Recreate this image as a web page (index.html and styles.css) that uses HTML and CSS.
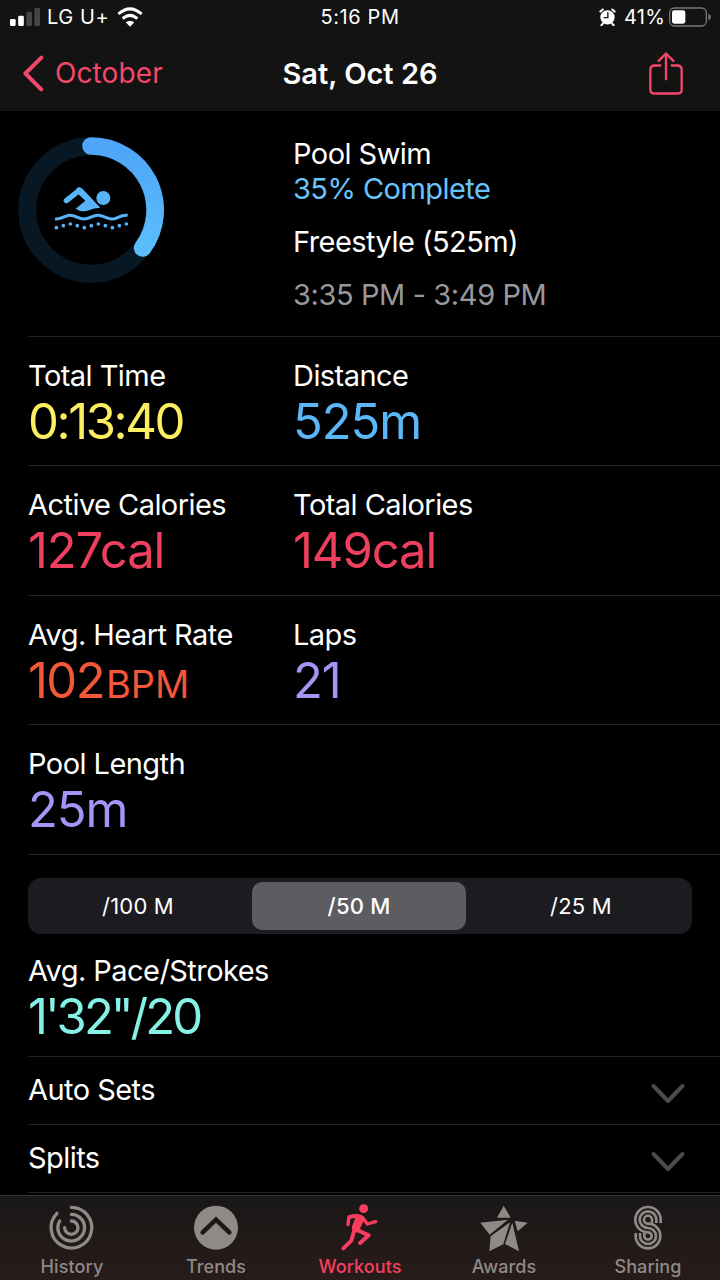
FILE: index.html
```html
<!DOCTYPE html>
<html lang="en">
<head>
    <meta charset="UTF-8">
    <meta name="viewport" content="width=device-width, initial-scale=1.0">
    <title>Workout</title>
    <link rel="stylesheet" href="styles.css">
</head>
<body>
    <header class="top">
        <div class="status">
            <div class="status-left">
                <svg class="signal" viewBox="0 0 90 54">
                    <rect x="0" y="33" width="17" height="21" rx="4"/>
                    <rect x="24.500" y="23" width="17" height="31" rx="4"/>
                    <rect class="off" x="49" y="11" width="17" height="43" rx="4"/>
                    <rect class="off" x="73" y="0" width="17" height="54" rx="4"/>
                </svg>
                <span class="carrier">LG U+</span>
                <svg class="wifi" viewBox="0 0 78 58">
                    <path d="M4 20Q39 -11 74 20"/>
                    <path d="M17 34Q39 14 61 34"/>
                    <path class="dot" d="M39 58L26 45Q39 35 52 45Z"/>
                </svg>
            </div>
            <span class="clock">5:16 PM</span>
            <div class="status-right">
                <svg class="alarm" viewBox="0 0 50 52">
                    <circle cx="25" cy="27" r="21"/>
                    <path class="ears" d="M4 10L11 4M46 10L39 4M11 46L7 50M39 46L43 50"/>
                    <path class="hands" d="M26 13V28H15"/>
                </svg>
                <span class="percent">41%</span>
                <svg class="battery" viewBox="0 0 126 58">
                    <rect class="shell" x="2" y="2" width="110" height="54" rx="14"/>
                    <rect class="charge" x="9" y="9" width="40" height="40" rx="7"/>
                    <path class="tip" d="M118 19Q126 22 126 29Q126 36 118 39Z"/>
                </svg>
            </div>
        </div>
        <nav class="nav">
            <a class="back">
                <svg class="back-icon" viewBox="0 0 66 112"><path d="M58 8L10 56L58 104"/></svg>
                <span>October</span>
            </a>
            <h1 class="title">Sat, Oct 26</h1>
            <svg class="share" viewBox="0 0 102 128">
                <path d="M34 40H17Q4 40 4 53V111Q4 124 17 124H85Q98 124 98 111V53Q98 40 85 40H68"/>
                <path d="M51 81V5M29 26L51 4L73 26"/>
            </svg>
        </nav>
    </header>

    <main class="content">
        <section class="summary line">
            <svg class="ring" viewBox="25 50 438 438">
                <defs>
                    <linearGradient id="ring-fill" x1="0" y1="0" x2="0" y2="1">
                        <stop offset="0" stop-color="#4fa5f7"/>
                        <stop offset="1" stop-color="#5abefb"/>
                    </linearGradient>
                </defs>
                <circle class="track" cx="244" cy="269" r="191"/>
                <path class="progress" d="M244 77A192 192 0 0 1 399 383"/>
                <g class="swimmer">
                    <circle cx="281" cy="233" r="21"/>
                    <path class="arm" d="M170 241L209 210"/>
                    <path d="M198 265L227 241L203 219L201 204Q209 197 219 206L272 262Q252 262 238 270Q216 278 198 265Z"/>
                    <path class="wave" d="M136 296C157 298 163 285 181 285S205 296 223 296S247 285 265 285S289 296 307 296S328 283 354 285"/>
                    <g>
                        <circle cx="140" cy="322" r="5.500"/><circle cx="161" cy="316" r="5.500"/>
                        <circle cx="182" cy="311" r="5.500"/><circle cx="203" cy="316" r="5.500"/>
                        <circle cx="224" cy="322" r="5.500"/><circle cx="245" cy="316" r="5.500"/>
                        <circle cx="266" cy="311" r="5.500"/><circle cx="287" cy="316" r="5.500"/>
                        <circle cx="308" cy="322" r="5.500"/><circle cx="329" cy="316" r="5.500"/>
                        <circle cx="350" cy="311" r="5.500"/>
                    </g>
                </g>
            </svg>
            <div class="details">
                <p class="label">Pool Swim</p>
                <p class="label complete">35% Complete</p>
                <p class="label stroke-type">Freestyle (525m)</p>
                <p class="label period">3:35 PM - 3:49 PM</p>
            </div>
        </section>

        <section class="metrics line">
            <div class="metric"><p class="label">Total Time</p><p class="value time">0:13:40</p></div>
            <div class="metric"><p class="label">Distance</p><p class="value distance">525m</p></div>
        </section>
        <section class="metrics line tall">
            <div class="metric"><p class="label">Active Calories</p><p class="value calories">127cal</p></div>
            <div class="metric"><p class="label">Total Calories</p><p class="value calories">149cal</p></div>
        </section>
        <section class="metrics line">
            <div class="metric"><p class="label">Avg. Heart Rate</p><p class="value heart">102<span class="unit">BPM</span></p></div>
            <div class="metric"><p class="label">Laps</p><p class="value pool">21</p></div>
        </section>
        <section class="metrics line tall">
            <div class="metric"><p class="label">Pool Length</p><p class="value pool">25m</p></div>
        </section>

        <section class="pace line">
            <div class="segments">
                <button class="segment">/100 M</button>
                <button class="segment selected">/50 M</button>
                <button class="segment">/25 M</button>
            </div>
            <p class="label">Avg. Pace/Strokes</p>
            <p class="value strokes">1'32"/20</p>
        </section>

        <section class="expand line">
            <p class="label">Auto Sets</p>
            <svg class="chevron" viewBox="0 0 34 22"><path d="M2.500 3L17 18L31.500 3"/></svg>
        </section>
        <section class="expand line">
            <p class="label">Splits</p>
            <svg class="chevron" viewBox="0 0 34 22"><path d="M2.500 3L17 18L31.500 3"/></svg>
        </section>
    </main>

    <footer class="tabs">
        <a class="tab">
            <svg class="tab-icon" viewBox="140 54 150 150">
                <g class="rings">
                    <path d="M213 67A61 61 0 1 1 170 85"/>
                    <path d="M213 88A40 40 0 1 1 178 108"/>
                    <path d="M213 108A20 20 0 1 1 193 128"/>
                </g>
            </svg>
            <span>History</span>
        </a>
        <a class="tab">
            <svg class="tab-icon" viewBox="573 54 150 150">
                <circle cx="648" cy="128" r="66"/>
                <path class="up" d="M608 142L648 104L688 142"/>
            </svg>
            <span>Trends</span>
        </a>
        <a class="tab active">
            <svg class="tab-icon" viewBox="104 54 150 150">
                <circle cx="190" cy="71" r="13.500"/>
                <path d="M150 90Q168 85 181 89Q192 93 192 104L178 133L174 143L157 139L154 127L165 99L150 101Z"/>
                <path class="limb" d="M143 119L146 95L172 93L186 97L201 117L226 110"/>
                <path class="limb leg" d="M175 104L165 132L205 151L179 174"/>
                <path class="limb leg" d="M163 132L153 167L129 190"/>
            </svg>
            <span>Workouts</span>
        </a>
        <a class="tab">
            <svg class="tab-icon" viewBox="535 54 150 150">
                <path d="M609 62L630 98H589Z"/>
                <path d="M539 113L622 104L567 149Z"/>
                <path d="M642 107L681 113L651 139Z"/>
                <path d="M566 199L570 154L628 112L608 178Z"/>
                <path d="M635 113L655 199L613 177Z"/>
            </svg>
            <span>Awards</span>
        </a>
        <a class="tab">
            <svg class="tab-icon" viewBox="966 54 150 150">
                <g class="strands">
                    <path d="M1079 114V104A38 38 0 1 0 1041 142A11 11 0 1 1 1030 153V144"/>
                    <path d="M1066 114V104A25 25 0 1 0 1041 129A24 24 0 1 1 1017 153V144"/>
                    <path d="M1053 114V104A12 12 0 1 0 1041 116A37 37 0 1 1 1004 153V144"/>
                </g>
            </svg>
            <span>Sharing</span>
        </a>
    </footer>
</body>
</html>
```
FILE: styles.css
```css
* {
    box-sizing: border-box;
}

body {
    margin: 0;
    width: 720px;
    height: 1280px;
    display: flex;
    flex-direction: column;
    overflow: hidden;
    background-color: #000;
    color: #fff;
    font-family: Inter, "Liberation Sans", sans-serif;
}

p, h1 {
    margin: 0;
    white-space: nowrap;
}

svg {
    display: block;
    flex: none;
}

/* status bar and navigation */
.top {
    height: 111px;
    background-color: #131313;
}

.status {
    height: 34px;
    padding: 0 10px;
    display: grid;
    grid-template-columns: 1fr auto 1fr;
    align-items: center;
    font-size: 20px;
    line-height: 34px;
    letter-spacing: 0.6px;
}

.status-left, .status-right {
    display: flex;
    align-items: center;
}

.status-right {
    justify-content: flex-end;
}

.signal {
    width: 30px;
    height: 18px;
    fill: #fff;
}

.signal .off {
    fill: #444;
}

.carrier {
    margin-left: 7px;
}

.wifi {
    width: 26px;
    height: 20px;
    margin-left: 8px;
    fill: none;
    stroke: #fff;
    stroke-width: 9;
}

.wifi .dot {
    fill: #fff;
    stroke: none;
}

.alarm {
    width: 17px;
    height: 18px;
    fill: #fff;
    stroke: #fff;
    stroke-width: 6;
    stroke-linecap: round;
}

.alarm circle {
    stroke: none;
}

.alarm .hands {
    fill: none;
    stroke: #131313;
    stroke-width: 4;
}

.percent {
    margin: 0 4px 0 8px;
    letter-spacing: 0.2px;
}

.battery {
    width: 42px;
    height: 20px;
    margin-right: -1px;
}

.battery .shell {
    fill: none;
    stroke: #77777a;
    stroke-width: 4;
}

.battery .charge {
    fill: #fff;
}

.battery .tip {
    fill: #77777a;
}

.nav {
    height: 77px;
    padding: 1px 22px 0;
    display: grid;
    grid-template-columns: 1fr auto 1fr;
    align-items: center;
    font-size: 28px;
}

.back {
    display: flex;
    align-items: center;
    gap: 11px;
    color: #f4486b;
    letter-spacing: 0.1px;
}

.back-icon {
    width: 22px;
    height: 37px;
    fill: none;
    stroke: #f4486b;
    stroke-width: 12;
    stroke-linecap: round;
    stroke-linejoin: round;
}

.title {
    font-size: 29px;
    font-weight: 600;
}

.share {
    width: 34px;
    height: 43px;
    margin-right: 15px;
    justify-self: end;
    fill: none;
    stroke: #f4486b;
    stroke-width: 7;
    stroke-linecap: round;
    stroke-linejoin: round;
}

/* workout details */
.content {
    flex: 1;
    padding-left: 28px;
}

.line {
    border-bottom: 1px solid #222224;
}

.label {
    font-size: 29px;
    line-height: 40px;
    letter-spacing: -0.55px;
}

.value {
    font-size: 49px;
    line-height: 52px;
    letter-spacing: -1.1px;
}

.summary, .metrics {
    display: grid;
    grid-template-columns: 265px 1fr;
}

.summary {
    height: 226px;
    padding-top: 26px;
}

.summary .label {
    line-height: 35px;
}

.ring {
    width: 146px;
    height: 146px;
    margin-left: -10px;
}

.details {
    margin-top: -1px;
}

.track {
    fill: none;
    stroke: #071723;
    stroke-width: 54;
}

.progress {
    fill: none;
    stroke: url(#ring-fill);
    stroke-width: 53;
    stroke-linecap: round;
}

.swimmer {
    fill: #58b4f8;
}

.arm, .wave {
    fill: none;
    stroke: #58b4f8;
    stroke-linecap: round;
}

.arm {
    stroke-width: 16;
}

.wave {
    stroke-width: 9;
    stroke-linecap: butt;
}

.label.complete {
    color: #68c4fa;
}

.label.stroke-type {
    margin: 18px 0;
}

.label.period {
    color: #98989d;
    letter-spacing: -0.4px;
}

.metrics {
    height: 129px;
    padding-top: 19px;
}

.metrics.tall {
    height: 130px;
}

.time {
    color: #fbee60;
    letter-spacing: -2.4px;
}

.distance {
    color: #5ab8f8;
}

.calories {
    color: #ee3f5e;
}

.heart {
    color: #f4563a;
    letter-spacing: -1.6px;
}

.unit {
    margin-left: 2px;
    font-size: 38px;
    letter-spacing: 0;
}

.pool {
    color: #a594f5;
}

.strokes {
    color: #86f1e6;
    letter-spacing: -3px;
}

.pace {
    height: 202px;
    padding-top: 23px;
}

.segments {
    width: 664px;
    height: 56px;
    margin-bottom: 17px;
    padding: 4px;
    display: grid;
    grid-template-columns: 212px 214px 214px;
    gap: 8px;
    border-radius: 13px;
    background-color: #1c1c20;
}

.segment {
    padding: 0;
    border: none;
    border-radius: 10px;
    background: none;
    color: #fff;
    font-family: inherit;
    font-size: 22px;
    font-weight: 400;
    letter-spacing: 0.2px;
}

.segment.selected {
    background-color: #5c5c61;
    font-weight: 500;
}

.expand {
    height: 68px;
    padding: 0 35px 2px 0;
    display: flex;
    align-items: center;
    justify-content: space-between;
}

.chevron {
    width: 34px;
    height: 22px;
    margin-top: 9px;
    fill: none;
    stroke: #4b4b4e;
    stroke-width: 4;
    stroke-linecap: round;
    stroke-linejoin: round;
}

/* bottom tab bar */
.tabs {
    height: 85px;
    padding: 7px 0 0;
    display: grid;
    grid-template-columns: repeat(5, 1fr);
    border-top: 1px solid #353434;
    background: linear-gradient(#191717, #281c1a);
}

.tab {
    display: flex;
    flex-direction: column;
    align-items: center;
    color: #8f8a88;
    fill: #8f8a88;
    font-size: 18px;
    line-height: 27px;
    font-weight: 500;
    letter-spacing: 0.1px;
}

.tab.active {
    color: #f83e5e;
    fill: #f83e5e;
}

.tab-icon {
    width: 50px;
    height: 50px;
}

.rings, .strands {
    fill: none;
    stroke: #8f8a88;
    stroke-width: 10;
    stroke-linecap: round;
}

.strands {
    stroke-width: 8;
    stroke-linecap: butt;
}

.up {
    fill: none;
    stroke: #1e1817;
    stroke-width: 14;
    stroke-linecap: round;
}

.limb {
    fill: none;
    stroke: #f83e5e;
    stroke-width: 10;
    stroke-linecap: round;
    stroke-linejoin: round;
}

.leg {
    stroke-width: 12;
}
```
